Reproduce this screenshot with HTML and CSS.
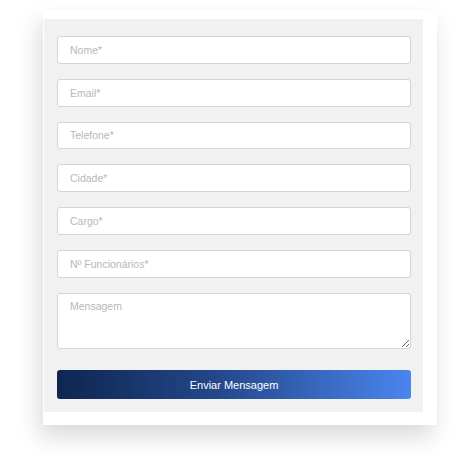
FILE: index.html
```html
<!DOCTYPE html>
<html lang="pt">
<head>
  <meta charset="UTF-8" />
  <meta name="viewport" content="width=device-width, initial-scale=1.0" />
  <title>Contato</title>
  <link rel="stylesheet" href="styles.css">
</head>
<body>
  <div class="card">
    <form class="contact-form" onsubmit="return false;">
      <input type="text" class="field" placeholder="Nome*" />
      <input type="email" class="field" placeholder="Email*" />
      <input type="tel" class="field" placeholder="Telefone*" />
      <input type="text" class="field" placeholder="Cidade*" />
      <input type="text" class="field" placeholder="Cargo*" />
      <input type="text" class="field" placeholder="Nº Funcionários*" />
      <textarea class="field message" placeholder="Mensagem"></textarea>
      <button type="submit" class="send-btn">Enviar Mensagem</button>
    </form>
  </div>
</body>
</html>
```

FILE: styles.css
```css
body {
  margin: 0;
  padding: 10px 0 31px;
  background: #fff;
  font-family: 'Liberation Sans', Arial, sans-serif;
}

.card {
  box-sizing: border-box;
  width: 394px;
  height: 415px;
  margin-left: 43px;
  padding: 9px 14px 13px 1px;
  background: #fff;
  box-shadow: -4px 12px 22px rgba(0, 0, 0, 0.15);
}

.contact-form {
  display: flex;
  flex-direction: column;
  gap: 15px;
  height: 100%;
  box-sizing: border-box;
  padding: 17px 12px 13px 13px;
  background: #f1f1f1;
}

.field {
  box-sizing: border-box;
  width: 100%;
  height: 28px;
  margin: 0;
  padding: 0 12px;
  border: 1px solid #d4d4d4;
  border-radius: 3px;
  background: #fff;
  font-family: 'Liberation Sans', Arial, sans-serif;
  font-size: 10.5px;
  color: #333;
  outline: none;
}

.field::placeholder {
  color: #b8b8b8;
}

.message {
  height: 57px;
  padding: 6px 12px;
  resize: vertical;
}

.send-btn {
  height: 29px;
  margin-top: 6px;
  border: none;
  border-radius: 3px;
  background: linear-gradient(90deg, #0e2651, #24478a 45%, #4a85ee);
  color: #fff;
  font-family: 'Liberation Sans', Arial, sans-serif;
  font-size: 11px;
  cursor: pointer;
}
```
